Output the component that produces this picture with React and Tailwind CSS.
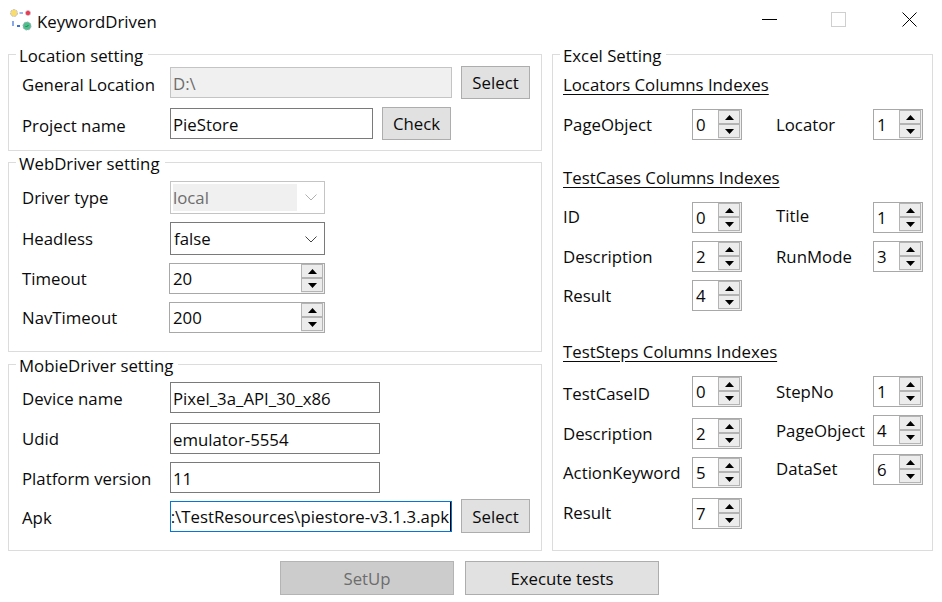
const sans = 'font-["Open_Sans","Noto_Sans",sans-serif]';

function SpinButton({ up }) {
  return (
    <div className="flex flex-1 items-center justify-center border border-[#b4b4b4] bg-[#ececec]">
      <svg width="9" height="5" viewBox="0 0 9 5">
        <path d={up ? 'M4.5 0L9 5H0z' : 'M4.5 5L0 0h9z'} fill="#000" />
      </svg>
    </div>
  );
}

function Spin({ value, className = 'w-[50px]' }) {
  return (
    <div className={`flex h-[31px] shrink-0 items-stretch border border-[#a8a8a8] bg-white ${className}`}>
      <div className="flex-1 pl-[3px] leading-[29px]">{value}</div>
      <div className="flex w-[23px] flex-col bg-[#f0f0f0] pb-px pr-px pt-0">
        <SpinButton up />
        <SpinButton />
      </div>
    </div>
  );
}

function Chevron({ color }) {
  return (
    <svg width="12" height="7" viewBox="0 0 12 7" fill="none">
      <path d="M.5.5L6 6 11.5.5" stroke={color} />
    </svg>
  );
}

function Btn({ children, className = '' }) {
  return (
    <button className={`w-[69px] border border-[#adadad] bg-[#e1e1e1] pt-px text-center ${className}`}>{children}</button>
  );
}

function Field({ value, className, disabled }) {
  return (
    <div
      className={`h-[31px] shrink-0 overflow-hidden whitespace-nowrap border pl-[2px] leading-[31px] ${
        disabled ? 'border-[#c4c4c4] bg-[#f0f0f0] text-[#6d6d6d]' : 'border-[#7a7a7a] bg-white'
      } ${className}`}
    >
      {value}
    </div>
  );
}

function Group({ title, className, children }) {
  return (
    <fieldset className={`border border-[#dcdcdc] ${className}`}>
      <legend className="ml-[7px] h-[20px] pl-[3px] pr-[5px] leading-[24px]">{title}</legend>
      {children}
    </fieldset>
  );
}

function Row({ label, labelClass = '', className = '', children }) {
  return (
    <div className={`flex items-center ${className}`}>
      <span className={`w-[161px] pl-[13px] ${labelClass}`}>{label}</span>
      {children}
    </div>
  );
}

function Cell({ label, value, width, labelClass = '', className = '' }) {
  return (
    <div className={`flex items-center ${className}`}>
      <span className={`whitespace-nowrap ${width} ${labelClass}`}>{label}</span>
      <Spin value={value} />
    </div>
  );
}

function Left(props) {
  return <Cell width="w-[129px]" {...props} />;
}

function Right(props) {
  return <Cell width="w-[97px]" {...props} />;
}

function Heading({ children, className = '' }) {
  return <div className={`h-[24px] leading-[24px] underline underline-offset-[3px] ${className}`}>{children}</div>;
}

export default function App() {
  return (
    <div className={`h-[602px] w-[942px] overflow-hidden bg-white text-[16.8px] text-[#0a0a0a] ${sans}`}>
      <div className="flex h-[44px] items-center">
        <svg className="ml-[9px] mb-[4px]" width="24" height="26" viewBox="0 0 24 26">
          <circle cx="5" cy="6" r="3.5" fill="#f8dc6c" stroke="#bcbcd8" strokeDasharray="2 1" />
          <path d="M10.5 6H14" stroke="#3a6fd8" />
          <circle cx="19" cy="6" r="2.5" fill="#ec3a4e" stroke="#c8c8dc" strokeDasharray="2 1" />
          <path d="M4 14v5" stroke="#3a6fd8" strokeWidth="1.2" />
          <path d="M8 19h3" stroke="#3a6fd8" strokeWidth="2" />
          <circle cx="18" cy="19" r="4" fill="#4cc08a" stroke="#a9a9c0" strokeDasharray="2 1" />
          <path d="M16.5 19l1 1 2-2" stroke="#1f7a50" fill="none" />
        </svg>
        <span className="ml-[4px]">KeywordDriven</span>
        <div className="ml-auto flex items-center pb-[5px] pr-[25px]">
          <div className="h-px w-[15px] bg-black" />
          <div className="ml-[54px] h-[15px] w-[15px] border border-[#cfcfcf]" />
          <svg className="ml-[56px]" width="15" height="15" viewBox="0 0 15 15">
            <path d="M.5.5l14 14M14.5.5l-14 14" stroke="#000" />
          </svg>
        </div>
      </div>

      <div className="flex gap-[10px] pl-[8px]">
        <div className="w-[534px]">
          <Group title="Location setting" className="h-[107px]">
            <Row label="General Location" labelClass="pt-[5px]" className="mt-[2px]">
              <Field value="D:\" disabled className="w-[282px]" />
              <Btn className="ml-[9px] h-[33px]">Select</Btn>
            </Row>
            <Row label="Project name" labelClass="pt-[5px]" className="mt-[8px]">
              <Field value="PieStore" className="w-[203px]" />
              <Btn className="ml-[9px] h-[33px]">Check</Btn>
            </Row>
          </Group>

          <Group title="WebDriver setting" className="mt-px h-[200px]">
            <Row label="Driver type" className="mt-[9px]">
              <div className="flex h-[33px] w-[155px] items-center border border-[#c4c4c4] bg-white p-[2px] pr-[7px]">
                <div className="h-full w-[124px] bg-[#f0f0f0] leading-[27px] text-[#6d6d6d]">local</div>
                <span className="ml-auto flex"><Chevron color="#b0b0b0" /></span>
              </div>
            </Row>
            <Row label="Headless" className="mt-[8px]">
              <div className="flex h-[33px] w-[155px] items-center justify-between border border-[#7a7a7a] bg-white pl-[3px] pr-[7px] pt-px">
                false
                <Chevron color="#444" />
              </div>
            </Row>
            <Row label="Timeout" className="mt-[8px]">
              <Spin value="20" className="-ml-px w-[156px]" />
            </Row>
            <Row label="NavTimeout" className="mt-[8px]">
              <Spin value="200" className="-ml-px w-[156px]" />
            </Row>
          </Group>

          <Group title="MobieDriver setting" className="mt-[2px] h-[197px]">
            <Row label="Device name" labelClass="pt-[3px]" className="mt-[8px]">
              <Field value="Pixel_3a_API_30_x86" className="w-[210px]" />
            </Row>
            <Row label="Udid" className="mt-[10px]">
              <Field value="emulator-5554" className="w-[210px]" />
            </Row>
            <Row label="Platform version" labelClass="pt-[3px]" className="mt-[8px]">
              <Field value="11" className="w-[210px]" />
            </Row>
            <Row label="Apk" labelClass="pt-[3px]" className="mt-[6px]">
              <div className="mt-[2px] flex h-[31px] w-[282px] shrink-0 justify-end self-start overflow-hidden whitespace-nowrap border border-[#0078d7] leading-[29px]">
                <span className="border-r border-black pr-px">:\TestResources\piestore-v3.1.3.apk</span>
              </div>
              <Btn className="ml-[9px] h-[34px]">Select</Btn>
            </Row>
          </Group>
        </div>

        <Group title="Excel Setting" className="h-[507px] w-[381px]">
          <div className="pl-[10px]">
            <Heading className="mt-[9px]">Locators Columns Indexes</Heading>
            <div className="mt-[12px] flex gap-[34px]">
              <Left label="PageObject" value="0" />
              <Right label="Locator" value="1" />
            </div>

            <Heading className="mt-[26px]">TestCases Columns Indexes</Heading>
            <div className="mt-[12px] flex gap-[34px]">
              <Left label="ID" value="0" labelClass="pb-[2px]" />
              <Right label="Title" value="1" labelClass="pb-[3px]" />
            </div>
            <div className="mt-[8px] flex gap-[34px]">
              <Left label="Description" value="2" />
              <Right label="RunMode" value="3" />
            </div>
            <Left label="Result" value="4" className="mt-[8px]" />

            <Heading className="mt-[29px]">TestSteps Columns Indexes</Heading>
            <div className="mt-[12px] flex gap-[34px]">
              <div>
                <Left label="TestCaseID" value="0" labelClass="pt-[4px]" />
                <Left label="Description" value="2" className="mt-[11px]" />
                <Left label="ActionKeyword" value="5" className="mt-[8px]" />
                <Left label="Result" value="7" labelClass="pb-[2px]" className="mt-[10px]" />
              </div>
              <div>
                <Right label="StepNo" value="1" />
                <Right label="PageObject" value="4" className="mt-[8px]" />
                <Right label="DataSet" value="6" labelClass="pb-[2px]" className="mt-[8px]" />
              </div>
            </div>
          </div>
        </Group>
      </div>

      <div className="mt-[10px] flex gap-[11px] pl-[280px]">
        <button className="h-[34px] w-[174px] border border-[#b4b4b4] bg-[#cccccc] pt-px text-[#6d6d6d]">SetUp</button>
        <Btn className="h-[34px] !w-[194px]">Execute tests</Btn>
      </div>
    </div>
  );
}
